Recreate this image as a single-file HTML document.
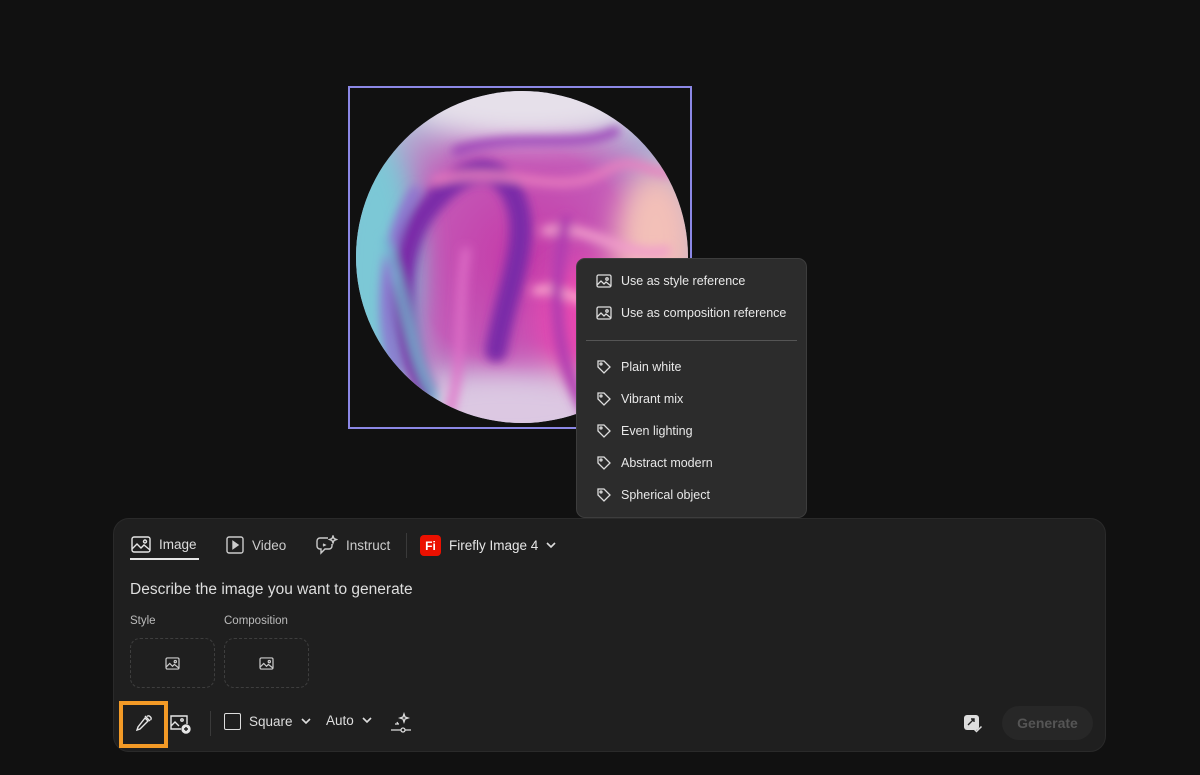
<!DOCTYPE html>
<html><head><style>
*{margin:0;padding:0;box-sizing:border-box}
body{width:1200px;height:775px;background:#111111;font-family:"Liberation Sans",sans-serif;color:#e6e6e6;position:relative;overflow:hidden}
.frame{position:absolute;left:348px;top:86px;width:344px;height:343px;border:2px solid #8c88e6}
.menu{position:absolute;left:576px;top:258px;width:231px;height:260px;background:#2c2c2c;border:1px solid #3d3d3d;border-radius:9px;font-size:12.5px;color:#e8e8e8}
.mi{position:absolute;left:19px;height:20px;display:flex;align-items:center;gap:9px}
.sep{position:absolute;left:9px;right:9px;top:81px;height:1px;background:#555}
.panel{position:absolute;left:113px;top:518px;width:993px;height:234px;background:#1f1f1f;border-radius:16px;border:1px solid #2a2a2a}
.t{position:absolute;font-size:13.5px;color:#ddd;display:flex;align-items:center;gap:8px}
.lbl{position:absolute;font-size:11.5px;color:#bbb}
.box{position:absolute;width:85px;height:50px;border:1.5px dashed #3e3e3e;border-radius:10px;display:flex;align-items:center;justify-content:center}
svg{display:block}
</style></head><body>
<div class="frame"></div>
<svg style="position:absolute;left:356px;top:91px" width="332" height="332" viewBox="0 0 332 332">
<defs>
<clipPath id="c"><circle cx="166" cy="166" r="166"/></clipPath>
<radialGradient id="g" cx="50%" cy="50%" r="55%"><stop offset="0" stop-color="#c53aa8"/><stop offset=".6" stop-color="#c45bb8"/><stop offset="1" stop-color="#a9c3d8"/></radialGradient>
<filter id="b"><feGaussianBlur stdDeviation="5"/></filter>
<filter id="b2"><feGaussianBlur stdDeviation="14"/></filter>
</defs>
<g clip-path="url(#c)">
<rect width="332" height="332" fill="url(#g)"/>
<g filter="url(#b2)">
<ellipse cx="20" cy="180" rx="45" ry="130" fill="#7cc8d6"/>
<ellipse cx="170" cy="10" rx="120" ry="40" fill="#e6e0ea"/>
<ellipse cx="300" cy="150" rx="40" ry="70" fill="#f3c0b8"/>
<ellipse cx="150" cy="320" rx="120" ry="40" fill="#dcc8e2"/>
<ellipse cx="230" cy="230" rx="50" ry="60" fill="#e64ab0"/>
</g>
<g filter="url(#b)" fill="none" stroke-linecap="round">
<path d="M70 300 C40 240 40 160 70 120 C100 80 140 60 160 110 C175 150 150 200 140 260" stroke="#7a2aa8" stroke-width="22"/>
<path d="M40 280 C20 220 30 140 60 100" stroke="#8e6ed0" stroke-width="10"/>
<path d="M100 60 C160 40 220 60 260 40" stroke="#9a3fb8" stroke-width="9"/>
<path d="M80 90 C150 70 200 110 250 80 C280 60 300 90 320 80" stroke="#ea7fbf" stroke-width="8"/>
<path d="M190 140 C230 130 270 170 310 160" stroke="#f09ccb" stroke-width="10"/>
<path d="M180 200 C210 190 240 230 300 220" stroke="#ffb0d0" stroke-width="8"/>
<path d="M210 130 C200 180 190 250 230 320" stroke="#b03cb0" stroke-width="12"/>
<path d="M110 160 C100 220 110 280 90 330" stroke="#e070c8" stroke-width="8"/>
<path d="M250 250 C270 280 240 310 260 330" stroke="#f2a8d4" stroke-width="9"/>
<path d="M30 150 C50 200 50 260 80 310" stroke="#6fb8d2" stroke-width="7"/>
</g>
</g>
</svg>

<div class="menu">
 <div class="mi" style="top:12px"><svg width="16" height="14" viewBox="0 0 16 14" fill="none" stroke="#ddd" stroke-width="1.3"><rect x="1" y="1" width="14" height="12" rx="1.5"/><path d="M1 11l4-4 3 3 2-2 5 4"/><circle cx="11" cy="5" r="1.2"/></svg>Use as style reference</div>
 <div class="mi" style="top:44px"><svg width="16" height="14" viewBox="0 0 16 14" fill="none" stroke="#ddd" stroke-width="1.3"><rect x="1" y="1" width="14" height="12" rx="1.5"/><path d="M1 11l4-4 3 3 2-2 5 4"/><circle cx="11" cy="5" r="1.2"/></svg>Use as composition reference</div>
 <div class="sep"></div>
 <div class="mi" style="top:98px"><svg width="16" height="16" viewBox="0 0 16 16" fill="none" stroke="#ddd" stroke-width="1.3"><path d="M2 2h6l6 6-6 6-6-6z"/><circle cx="5" cy="5" r="1"/></svg>Plain white</div>
 <div class="mi" style="top:130px"><svg width="16" height="16" viewBox="0 0 16 16" fill="none" stroke="#ddd" stroke-width="1.3"><path d="M2 2h6l6 6-6 6-6-6z"/><circle cx="5" cy="5" r="1"/></svg>Vibrant mix</div>
 <div class="mi" style="top:162px"><svg width="16" height="16" viewBox="0 0 16 16" fill="none" stroke="#ddd" stroke-width="1.3"><path d="M2 2h6l6 6-6 6-6-6z"/><circle cx="5" cy="5" r="1"/></svg>Even lighting</div>
 <div class="mi" style="top:194px"><svg width="16" height="16" viewBox="0 0 16 16" fill="none" stroke="#ddd" stroke-width="1.3"><path d="M2 2h6l6 6-6 6-6-6z"/><circle cx="5" cy="5" r="1"/></svg>Abstract modern</div>
 <div class="mi" style="top:226px"><svg width="16" height="16" viewBox="0 0 16 16" fill="none" stroke="#ddd" stroke-width="1.3"><path d="M2 2h6l6 6-6 6-6-6z"/><circle cx="5" cy="5" r="1"/></svg>Spherical object</div>
</div>

<div class="panel"></div>
<div class="t" style="left:131px;top:536px"><svg width="20" height="17" viewBox="0 0 20 17" fill="none" stroke="#e6e6e6" stroke-width="1.4"><rect x="1" y="1" width="18" height="15" rx="2"/><path d="M1 13l5-5 4 4 3-3 6 5"/><circle cx="14" cy="5.5" r="1.5"/></svg>Image</div>
<div style="position:absolute;left:130px;top:558px;width:69px;height:2px;background:#e6e6e6"></div>
<div class="t" style="left:226px;top:536px;color:#ccc"><svg width="18" height="18" viewBox="0 0 18 18" fill="none" stroke="#ccc" stroke-width="1.4"><rect x="1" y="1" width="16" height="16" rx="2"/><path d="M7 5.5v7l5-3.5z" fill="#ccc"/></svg>Video</div>
<div class="t" style="left:316px;top:535px;color:#ccc"><svg width="22" height="20" viewBox="0 0 22 20" fill="none" stroke="#ccc" stroke-width="1.4"><path d="M12 3H4a3 3 0 0 0-3 3v5a3 3 0 0 0 3 3h1v4l4-4h4a3 3 0 0 0 3-3V9"/><path d="M17 1l1 2.5 2.5 1-2.5 1-1 2.5-1-2.5-2.5-1 2.5-1z"/><path d="M7 9l2 1-2 1"/></svg>Instruct</div>
<div style="position:absolute;left:406px;top:533px;width:1px;height:25px;background:#3a3a3a"></div>
<div class="t" style="left:420px;top:535px;color:#e6e6e6"><span style="width:21px;height:21px;background:#eb1000;border-radius:4px;color:#fff;font-weight:bold;font-size:12px;display:flex;align-items:center;justify-content:center">Fi</span>Firefly Image 4 <svg width="10" height="7" viewBox="0 0 10 7" fill="none" stroke="#ddd" stroke-width="1.6"><path d="M1 1l4 4 4-4"/></svg></div>
<div style="position:absolute;left:130px;top:581px;font-size:15.5px;color:#dedede">Describe the image you want to generate</div>
<div class="lbl" style="left:130px;top:615px">Style</div>
<div class="lbl" style="left:224px;top:615px">Composition</div>
<div class="box" style="left:130px;top:638px"><svg width="15" height="13" viewBox="0 0 16 14" fill="none" stroke="#ccc" stroke-width="1.3"><rect x="1" y="1" width="14" height="12" rx="1.5"/><path d="M1 11l4-4 3 3 2-2 5 4"/><circle cx="11" cy="5" r="1.2"/></svg></div>
<div class="box" style="left:224px;top:638px"><svg width="15" height="13" viewBox="0 0 16 14" fill="none" stroke="#ccc" stroke-width="1.3"><rect x="1" y="1" width="14" height="12" rx="1.5"/><path d="M1 11l4-4 3 3 2-2 5 4"/><circle cx="11" cy="5" r="1.2"/></svg></div>

<div style="position:absolute;left:119px;top:701px;width:49px;height:47px;border:4px solid #f39a26"></div>
<svg style="position:absolute;left:133px;top:713px" width="20" height="20" viewBox="0 0 20 20" fill="none" stroke="#e6e6e6" stroke-width="1.4"><path d="M12 5l3 3-8 8-3 1 1-3z"/><path d="M12 3l5 5M14 3.5a2 2 0 0 1 3 0l.5.5a2 2 0 0 1 0 3"/></svg>
<svg style="position:absolute;left:169px;top:714px" width="22" height="20" viewBox="0 0 22 20" fill="none" stroke="#e6e6e6" stroke-width="1.4"><path d="M12 15H2V2h16v8"/><path d="M2 12l4-4 4 4"/><circle cx="13" cy="6" r="1.2"/><circle cx="17" cy="15" r="4" fill="#e6e6e6"/><path d="M17 13v4M15 15h4" stroke="#1f1f1f"/></svg>
<div style="position:absolute;left:210px;top:711px;width:1px;height:25px;background:#3a3a3a"></div>
<div class="t" style="left:224px;top:713px"><span style="width:17px;height:17px;border:1.5px solid #ddd;border-radius:2px"></span>Square <svg width="10" height="7" viewBox="0 0 10 7" fill="none" stroke="#ddd" stroke-width="1.6"><path d="M1 1l4 4 4-4"/></svg></div>
<div class="t" style="left:326px;top:713px">Auto <svg width="10" height="7" viewBox="0 0 10 7" fill="none" stroke="#ddd" stroke-width="1.6"><path d="M1 1l4 4 4-4"/></svg></div>
<svg style="position:absolute;left:390px;top:712px" width="22" height="22" viewBox="0 0 22 22" fill="none" stroke="#ddd" stroke-width="1.3"><path d="M14 2l1 3 3 1-3 1-1 3-1-3-3-1 3-1z"/><path d="M7 10l1 2M5 12h4"/><path d="M1 18h20"/><circle cx="13" cy="18" r="2" fill="#1f1f1f"/></svg>
<svg style="position:absolute;left:963px;top:714px" width="20" height="19" viewBox="0 0 20 19" fill="none"><rect x="1" y="1" width="15" height="15" rx="3" fill="#ddd"/><path d="M5 11l6-6M8 5h3v3" stroke="#1f1f1f" stroke-width="1.4"/><path d="M11 15l2.5 2.5 5-5" stroke="#ddd" stroke-width="1.5"/></svg>
<div style="position:absolute;left:1002px;top:706px;width:91px;height:34px;border-radius:17px;background:#272727;color:#555;font-size:14px;font-weight:bold;display:flex;align-items:center;justify-content:center">Generate</div>
</body></html>
